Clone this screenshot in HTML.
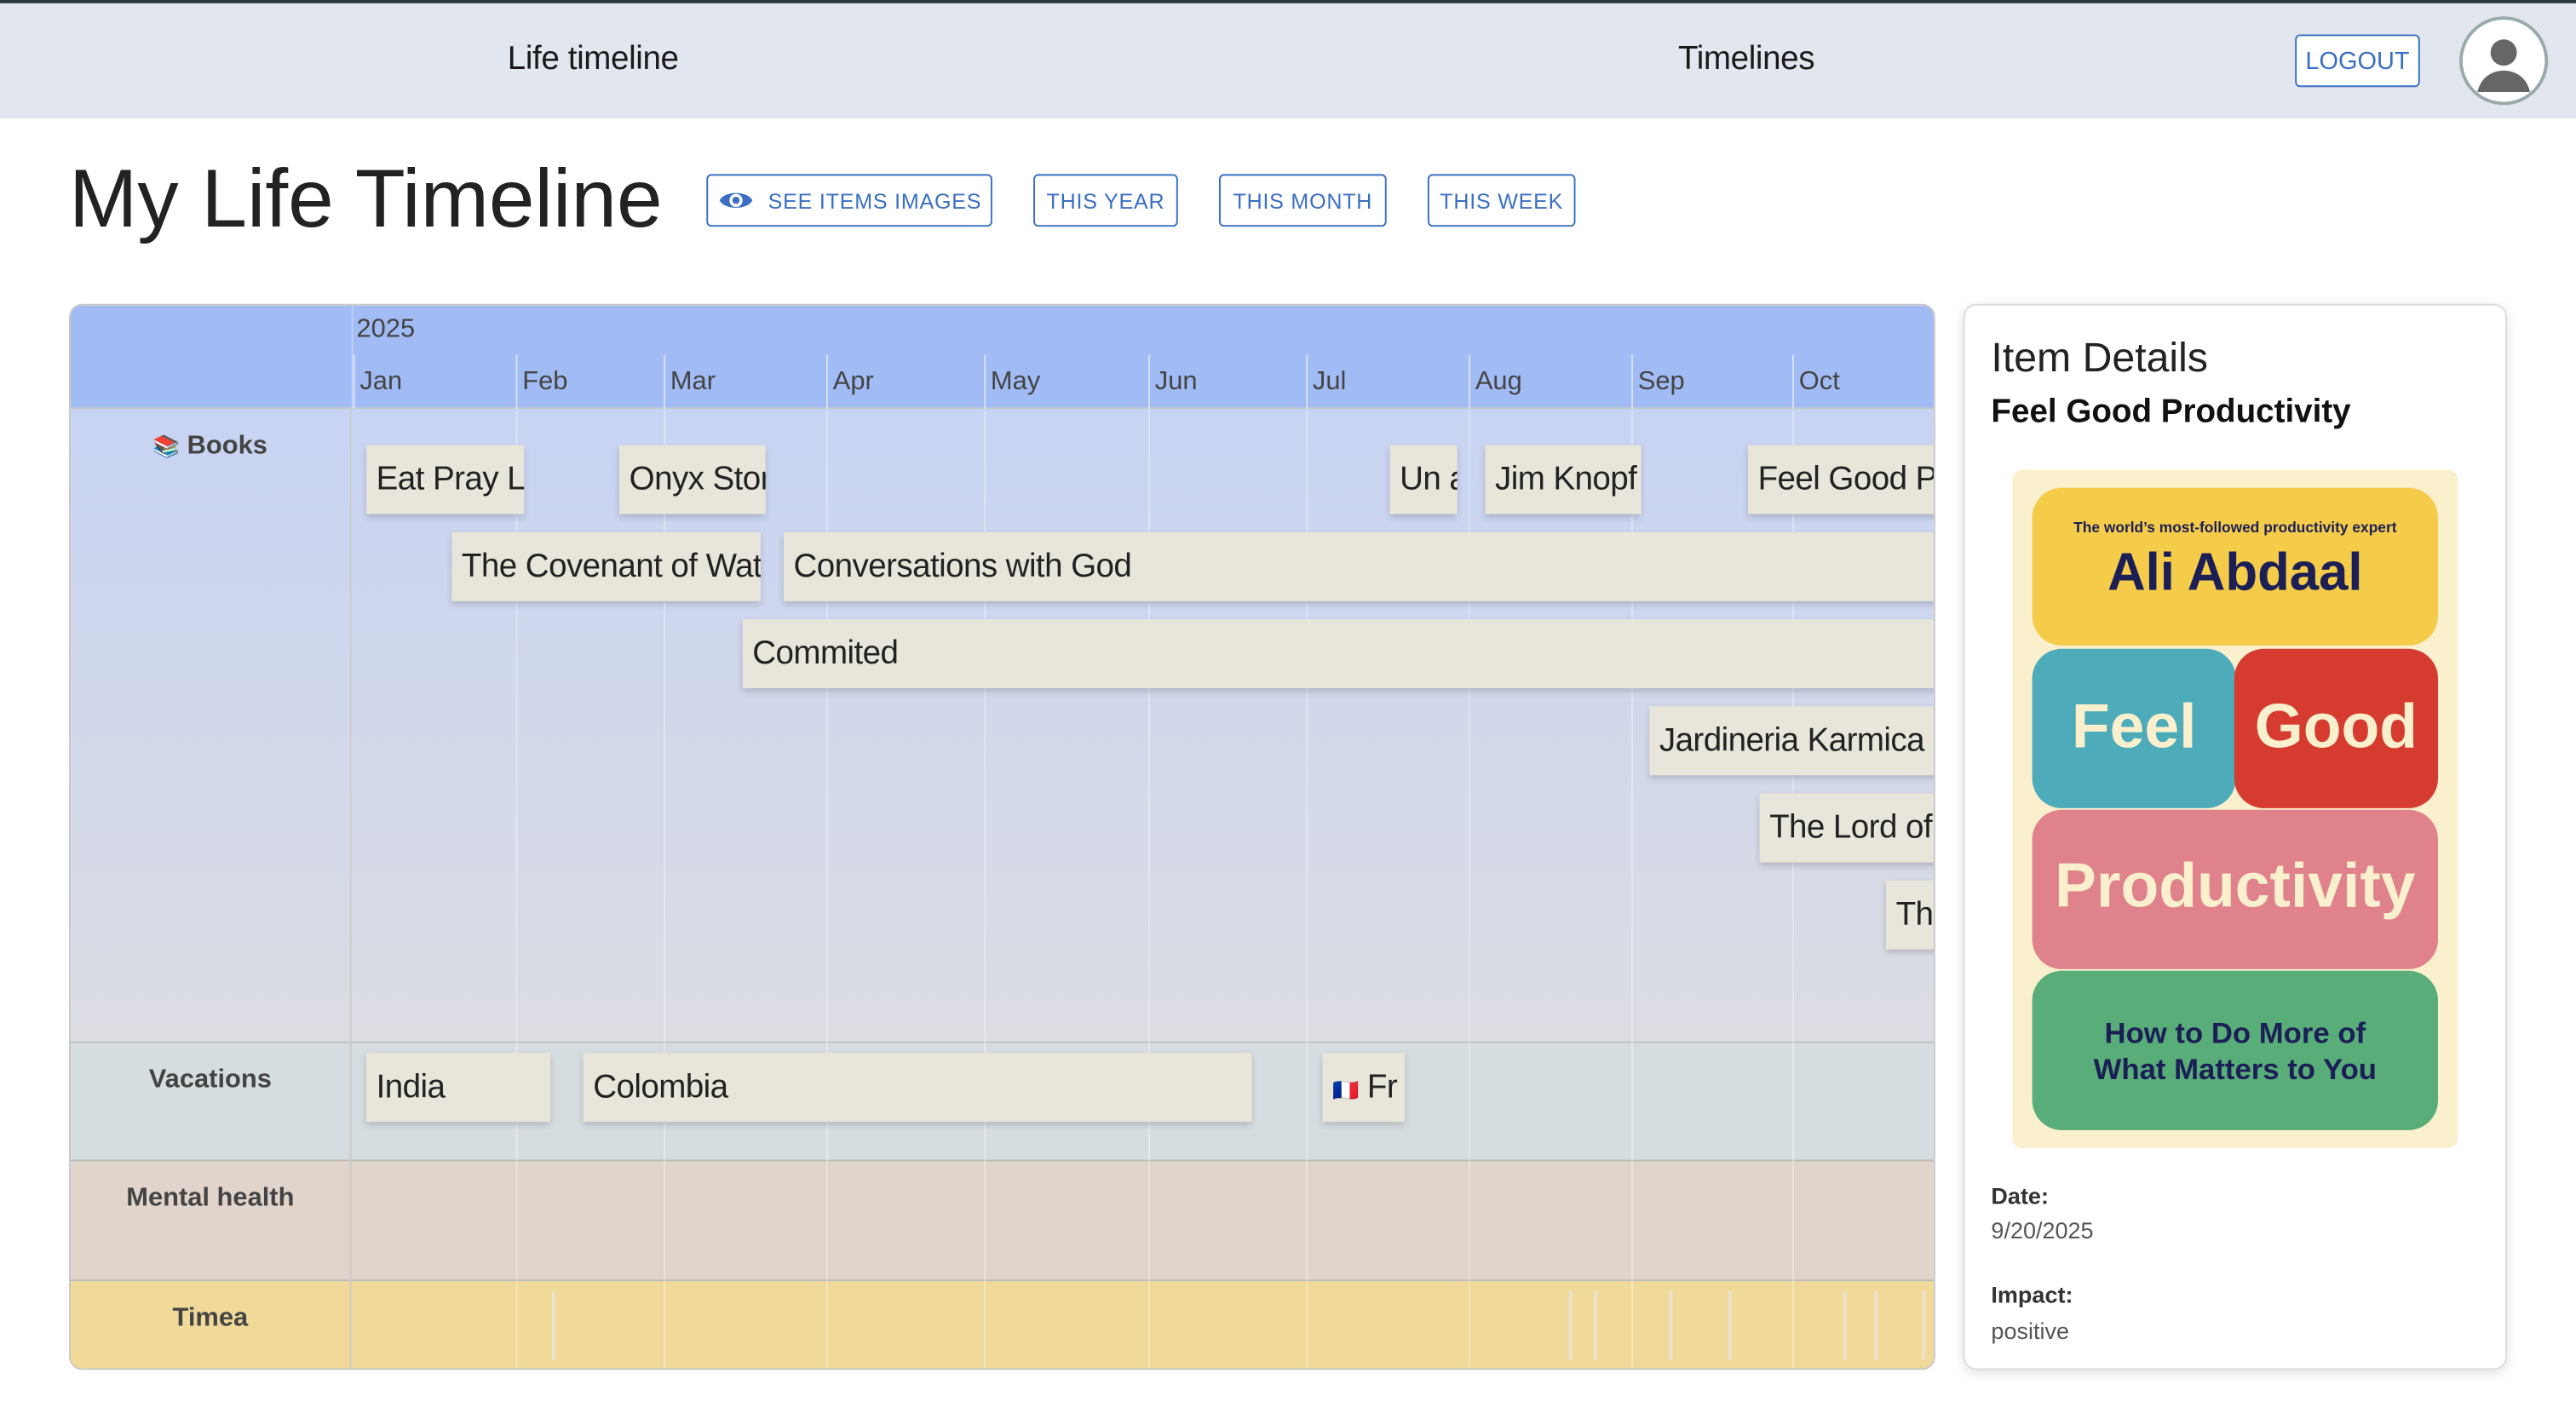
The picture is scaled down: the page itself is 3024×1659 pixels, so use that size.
<!DOCTYPE html>
<html><head><meta charset="utf-8">
<style>
*{box-sizing:border-box;margin:0;padding:0}
html,body{width:3024px;height:1658px;overflow:hidden;background:#fff}
#w{position:absolute;left:0;top:0;width:1568px;height:860px;transform:scale(1.92857);transform-origin:0 0;font-family:"Liberation Sans",sans-serif;color:#222}
.a{position:absolute}
.nav{left:0;top:0;width:1568px;height:72px;background:#e2e6ef;border-top:2px solid #2d3a40}
.nt{font-size:20px;top:25px;color:#1a1a1a;transform:translateX(-50%);white-space:nowrap;letter-spacing:-0.2px}
.btn{position:absolute;border:1px solid #3a6fc4;border-radius:3px;color:#3a6fc4;font-size:13px;letter-spacing:.4px;display:flex;align-items:center;justify-content:center;height:32px;top:106px;background:#fff}
.tl{left:42px;top:185px;width:1136px;height:649px;border:1px solid #c8c8c8;border-radius:8px;overflow:hidden}
.ml{position:absolute;top:30px;height:34px;border-left:1px solid #d8e0f5;font-size:16px;color:#444;padding:8px 0 0 3px}
.vl{position:absolute;top:64px;bottom:0;width:1px;background:rgba(255,255,255,.35)}
.it{position:absolute;height:42px;background:#e8e5da;font-size:20px;line-height:42px;padding-left:6px;white-space:nowrap;overflow:hidden;box-shadow:0 2px 4px rgba(0,0,0,.18);color:#222;letter-spacing:-0.3px}
.rl{position:absolute;left:0;width:171px;font-weight:bold;font-size:16px;color:#444;text-align:center;border-right:1px solid #c8c8c8;border-bottom:1px solid #bbb}
.rr{position:absolute;left:171px;right:0;border-bottom:1px solid #bbb}
.tk{position:absolute;top:600px;width:2px;height:42px;background:#e8e2cf}
</style></head><body><div id="w">
<div class="a nav"></div>
<div class="a nt" style="left:361px">Life timeline</div>
<div class="a nt" style="left:1063px">Timelines</div>
<div class="btn" style="left:1397px;top:21px;width:76px;font-size:15px;letter-spacing:0">LOGOUT</div>
<div class="a" style="left:1497px;top:10px;width:54px;height:54px;border-radius:50%;border:2px solid #9aa;background:#fff;overflow:hidden">
<svg width="50" height="50" viewBox="0 0 50 50"><circle cx="25" cy="20" r="8" fill="#666"/><path d="M9 44c2-9 9-13 16-13s14 4 16 13z" fill="#666"/></svg></div>
<div class="a" style="left:42px;top:92px;font-size:50px;color:#222">My Life Timeline</div>
<div class="btn" style="left:430px;width:174px"><svg width="22" height="16" viewBox="0 0 22 16" style="margin-right:9px"><path d="M1 8C4 2 18 2 21 8C18 14 4 14 1 8Z" fill="#3a6fc4"/><circle cx="11" cy="8" r="4" fill="#fff"/><circle cx="11" cy="8" r="2.2" fill="#3a6fc4"/></svg>SEE ITEMS IMAGES</div>
<div class="btn" style="left:629px;width:88px">THIS YEAR</div>
<div class="btn" style="left:742px;width:102px">THIS MONTH</div>
<div class="btn" style="left:869px;width:90px">THIS WEEK</div>

<div class="a tl">
<div class="a" style="left:0;top:0;width:1136px;height:63px;background:#a1bbf5;border-bottom:1px solid #c8c8c8"></div>
<div class="a" style="left:171px;top:0;width:1px;height:63px;background:#c0cff0"></div>
<div class="a" style="left:174px;top:6px;font-size:16px;color:#444">2025</div>
<div class="ml" style="left:172px">Jan</div><div class="ml" style="left:271px">Feb</div><div class="ml" style="left:361px">Mar</div><div class="ml" style="left:460px">Apr</div><div class="ml" style="left:556px">May</div><div class="ml" style="left:656px">Jun</div><div class="ml" style="left:752px">Jul</div><div class="ml" style="left:851px">Aug</div><div class="ml" style="left:950px">Sep</div><div class="ml" style="left:1048px">Oct</div>
<div class="rl" style="top:63px;height:386px;background:linear-gradient(#c8d4f3,#dcdde3);padding-top:14px"><span style="font-size:13px">📚</span> Books</div>
<div class="rr" style="top:63px;height:386px;background:linear-gradient(#c8d4f3,#dcdde3)"></div>
<div class="rl" style="top:449px;height:72px;background:#d6dde0;padding-top:14px">Vacations</div>
<div class="rr" style="top:449px;height:72px;background:#d6dde0"></div>
<div class="rl" style="top:521px;height:73px;background:#e1d5cb;padding-top:14px">Mental health</div>
<div class="rr" style="top:521px;height:73px;background:#e1d5cb"></div>
<div class="rl" style="top:594px;height:60px;background:#f1d999;padding-top:14px;border-bottom:0">Timea</div>
<div class="rr" style="top:594px;height:60px;background:#f1d999;border-bottom:0"></div>
<div class="vl" style="left:271px"></div><div class="vl" style="left:361px"></div><div class="vl" style="left:460px"></div><div class="vl" style="left:556px"></div><div class="vl" style="left:656px"></div><div class="vl" style="left:752px"></div><div class="vl" style="left:851px"></div><div class="vl" style="left:950px"></div><div class="vl" style="left:1048px"></div>
<div class="it" style="left:180px;top:85px;width:96px">Eat Pray Love</div>
<div class="it" style="left:334px;top:85px;width:89px">Onyx Storm</div>
<div class="it" style="left:803px;top:85px;width:41px">Un año</div>
<div class="it" style="left:861px;top:85px;width:95px">Jim Knopf</div>
<div class="it" style="left:1021px;top:85px;width:120px">Feel Good Productivity</div>
<div class="it" style="left:232px;top:138px;width:188px">The Covenant of Water</div>
<div class="it" style="left:434px;top:138px;width:710px">Conversations with God</div>
<div class="it" style="left:409px;top:191px;width:735px">Commited</div>
<div class="it" style="left:961px;top:244px;width:180px">Jardineria Karmica</div>
<div class="it" style="left:1028px;top:297px;width:115px">The Lord of the Rings</div>
<div class="it" style="left:1105px;top:350px;width:40px">The</div>
<div class="it" style="left:180px;top:455px;width:112px">India</div>
<div class="it" style="left:312px;top:455px;width:407px">Colombia</div>
<div class="it" style="left:762px;top:455px;width:50px"><span style="font-size:13px">🇫🇷</span> Fr</div>
<div class="tk" style="left:293px"></div><div class="tk" style="left:912px"></div><div class="tk" style="left:927px"></div><div class="tk" style="left:973px"></div><div class="tk" style="left:1009px"></div><div class="tk" style="left:1079px"></div><div class="tk" style="left:1098px"></div><div class="tk" style="left:1127px"></div>
</div>

<div class="a" style="left:1195px;top:185px;width:331px;height:649px;border:1px solid #ddd;border-radius:8px;box-shadow:0 2px 8px rgba(0,0,0,.12);background:#fff"></div>
<div class="a" style="left:1212px;top:204px;font-size:25px;color:#222">Item Details</div>
<div class="a" style="left:1212px;top:240px;font-size:20px;font-weight:bold;color:#111">Feel Good Productivity</div>
<div class="a" style="left:1225px;top:286px;width:271px;height:413px;background:#fbf0cd;border-radius:6px"></div>
<div class="a" style="left:1237px;top:297px;width:247px;height:96px;background:#f5cb4a;border-radius:18px;text-align:center;color:#1b1f55">
<div style="font-size:9px;font-weight:bold;margin-top:19px">The world’s most-followed productivity expert</div>
<div style="font-size:32px;font-weight:bold;margin-top:4px">Ali Abdaal</div></div>
<div class="a" style="left:1237px;top:395px;width:124px;height:97px;background:#4eabba;border-radius:18px;color:#fbf0cd;font-size:38px;font-weight:bold;text-align:center;line-height:97px">Feel</div>
<div class="a" style="left:1360px;top:395px;width:124px;height:97px;background:#d53c2f;border-radius:18px;color:#fbf0cd;font-size:38px;font-weight:bold;text-align:center;line-height:97px">Good</div>
<div class="a" style="left:1237px;top:493px;width:247px;height:97px;background:#e0828c;border-radius:18px;color:#fbf0cd;font-size:38px;font-weight:bold;text-align:center;line-height:94px">Productivity</div>
<div class="a" style="left:1237px;top:591px;width:247px;height:97px;background:#58ad79;border-radius:18px;color:#1b1f55;font-size:18px;font-weight:bold;text-align:center;line-height:22px;padding-top:27px">How to Do More of<br>What Matters to You</div>
<div class="a" style="left:1212px;top:720px;font-size:14px;font-weight:bold;color:#333">Date:</div>
<div class="a" style="left:1212px;top:741px;font-size:14px;color:#555">9/20/2025</div>
<div class="a" style="left:1212px;top:780px;font-size:14px;font-weight:bold;color:#333">Impact:</div>
<div class="a" style="left:1212px;top:802px;font-size:14px;color:#555">positive</div>
</div></body></html>
